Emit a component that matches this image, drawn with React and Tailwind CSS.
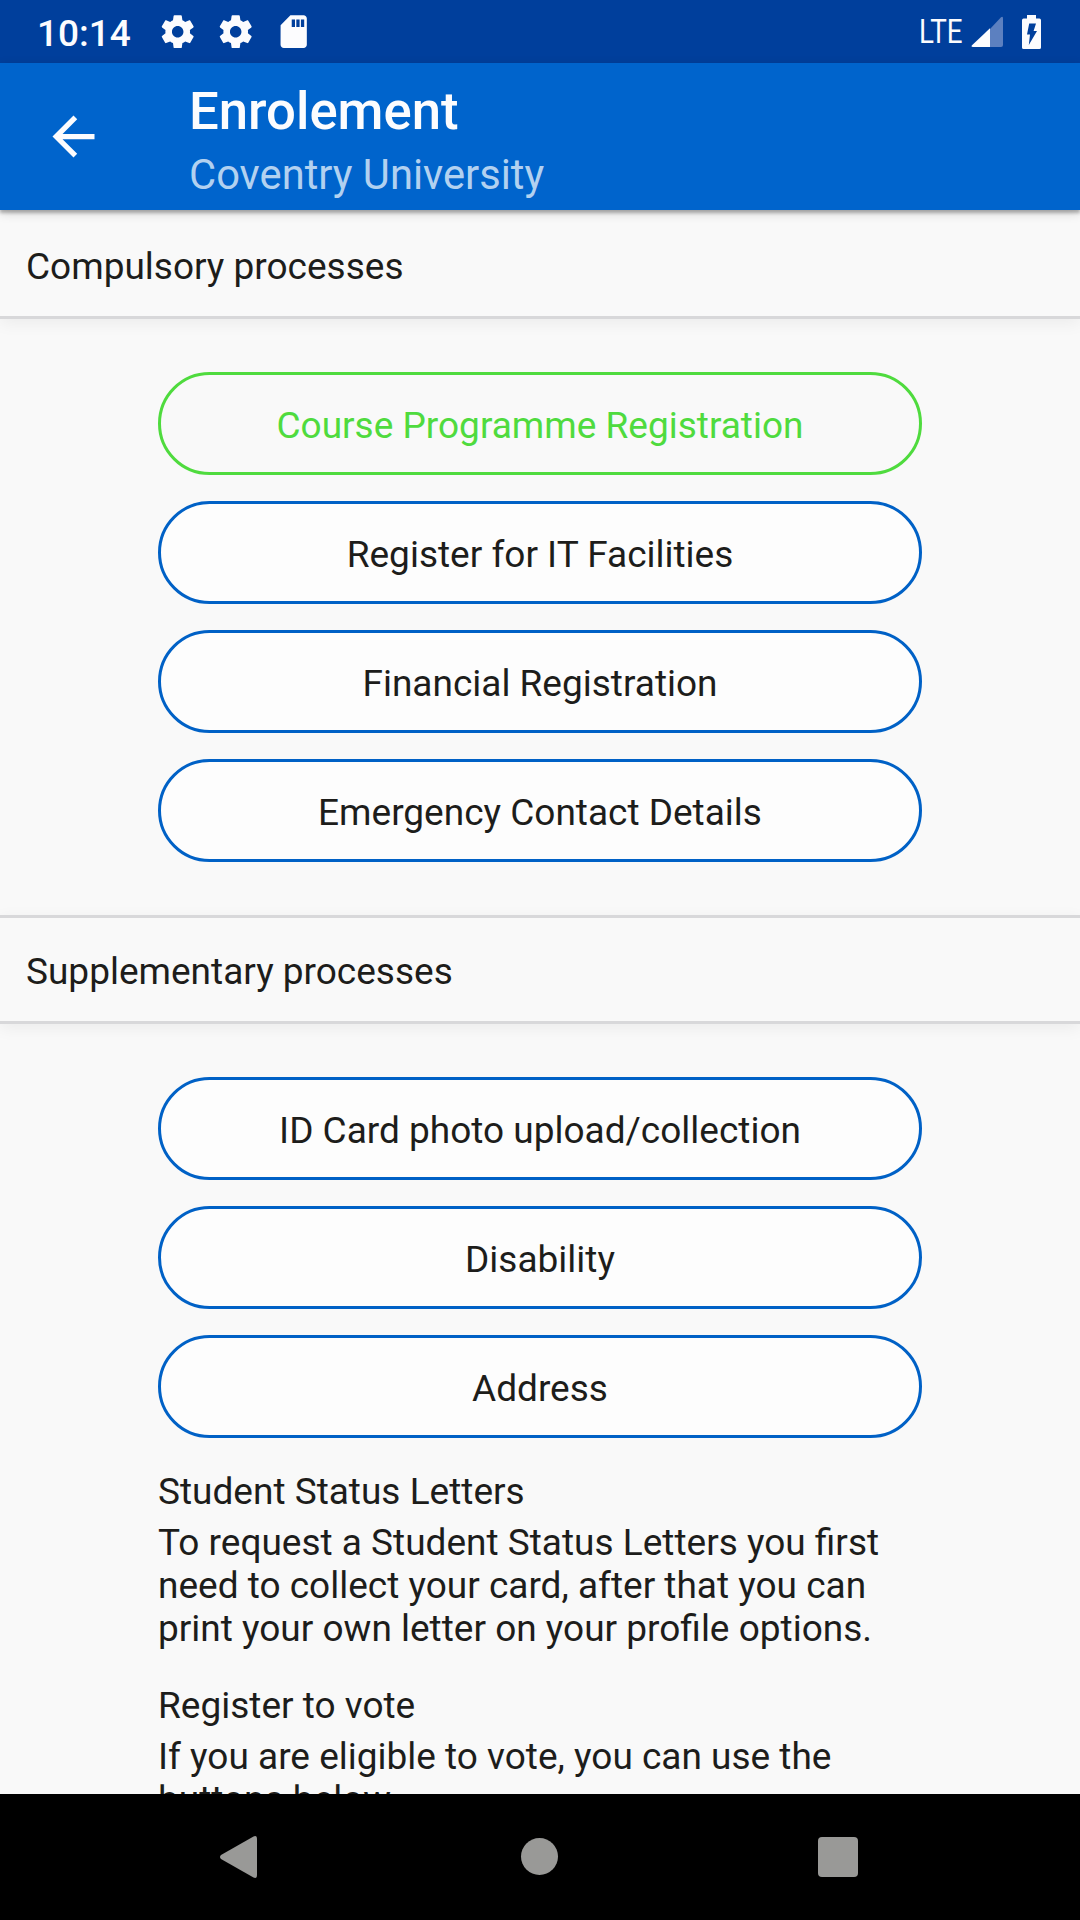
const compulsory = [
  { label: 'Course Programme Registration', done: true },
  { label: 'Register for IT Facilities' },
  { label: 'Financial Registration' },
  { label: 'Emergency Contact Details' },
];

const supplementary = [
  { label: 'ID Card photo upload/collection' },
  { label: 'Disability' },
  { label: 'Address' },
];

function GearIcon() {
  return (
    <svg viewBox="0 0 24 24" className="size-[39.4px] fill-[#fcfcfe]">
      <path d="M19.43 12.98c.04-.32.07-.64.07-.98s-.03-.66-.07-.98l2.11-1.65c.19-.15.24-.42.12-.64l-2-3.46c-.12-.22-.39-.3-.61-.22l-2.49 1c-.52-.4-1.08-.73-1.69-.98l-.38-2.65C14.46 2.18 14.25 2 14 2h-4c-.25 0-.46.18-.49.42l-.38 2.65c-.61.25-1.17.59-1.69.98l-2.49-1c-.23-.09-.49 0-.61.22l-2 3.46c-.13.22-.07.49.12.64l2.11 1.65c-.04.32-.07.65-.07.98s.03.66.07.98l-2.11 1.65c-.19.15-.24.42-.12.64l2 3.46c.12.22.39.3.61.22l2.49-1c.52.4 1.08.73 1.69.98l.38 2.65c.03.24.24.42.49.42h4c.25 0 .46-.18.49-.42l.38-2.65c.61-.25 1.17-.59 1.69-.98l2.49 1c.23.09.49 0 .61-.22l2-3.46c.12-.22.07-.49-.12-.64l-2.11-1.65zM12 15.5c-1.93 0-3.5-1.57-3.5-3.5s1.57-3.5 3.5-3.5 3.5 1.57 3.5 3.5-1.57 3.5-3.5 3.5z" />
    </svg>
  );
}

function SdCardIcon() {
  return (
    <svg viewBox="0 0 24 24" className="size-[39.4px] fill-[#fcfcfe]">
      <path d="M18 2h-8L4.02 8 4 20c0 1.1.9 2 2 2h12c1.1 0 2-.9 2-2V4c0-1.1-.9-2-2-2zm-5.200 7.200h-2V4.500h2v4.700zm2.800 0h-2V4.500h2v4.700zm2.800 0h-2V4.500h2v4.700z" />
    </svg>
  );
}

function StatusBar() {
  return (
    <div className="flex h-[63px] shrink-0 items-center bg-[#003f9c] pl-[37px] pr-[39px] text-[#fcfcfe]">
      <span className="w-[121px] pt-[3px] text-[37px] leading-[43px] font-medium">10:14</span>
      <div className="flex gap-[18.6px]">
        <GearIcon />
        <GearIcon />
        <SdCardIcon />
      </div>
      <div className="ml-auto flex items-center">
        <span className="w-[52px] origin-left scale-x-[0.84] text-[33px] leading-[39px]">LTE</span>
        <svg viewBox="0 0 32 32" className="size-8">
          <path d="M19 13 30 1.200q2-1.400 2 1V29q0 2-2 2H19z" className="fill-[#5c80c0]" />
          <path d="M19 12.200V31H2q-2.400 0-1-1.800z" className="fill-[#fcfcfe]" />
        </svg>
        <svg viewBox="0 0 19 34" className="ml-[19px] h-[34px] w-[19px]">
          <path d="M5 0h9v3.600h3.400Q19 3.600 19 5.200v27.200q0 1.600-1.600 1.600H1.600Q0 34 0 32.400V5.200Q0 3.600 1.600 3.600H5z" className="fill-[#fcfcfe]" />
          <path d="M7.200 8.500h6.800l-2.400 7.500h3.400L6.800 30l1.200-10.500H5z" className="fill-[#003f9c]" />
        </svg>
      </div>
    </div>
  );
}

function Toolbar() {
  return (
    <header className="relative z-10 flex h-[147px] shrink-0 items-center bg-[#0064cc] pl-[42px] shadow-[0_3px_3px_rgba(0,0,0,0.25),0_3px_10px_rgba(0,0,0,0.16)]">
      <svg viewBox="0 0 24 24" className="size-[63px] fill-[#fcfcfe]">
        <path d="M20 11H7.830l5.590-5.590L12 4l-8 8 8 8 1.410-1.410L7.830 13H20v-2z" />
      </svg>
      <div className="ml-[84px] pt-[6px]">
        <h1 className="text-[52.7px] leading-[62px] font-medium text-[#fcfcfe]">Enrolement</h1>
        <p className="mt-[8px] text-[41.7px] leading-[50px] text-[#b2d1f0]">Coventry University</p>
      </div>
    </header>
  );
}

function SectionHeader({ children, className }) {
  return (
    <h2 className={`shrink-0 border-[#d8d8da] border-b-[3px] px-[26px] shadow-[0_4px_16px_rgba(0,0,0,0.06)] ${className}`}>
      {children}
    </h2>
  );
}

function ProcessList({ items }) {
  return (
    <div className="flex flex-col gap-[26px]">
      {items.map(({ label, done }) => (
        <button
          key={label}
          className={`h-[103px] w-full rounded-full border-[3px] pt-[4px] text-center leading-[43px] ${
            done ? 'border-[#4fdb3e] text-[#4fdb3e]' : 'border-[#0061c6] bg-[#fdfdfd]'
          }`}
        >
          {label}
        </button>
      ))}
    </div>
  );
}

function NavBar() {
  return (
    <nav className="z-10 flex h-[126px] shrink-0 items-center bg-black">
      <svg viewBox="0 0 37 42" className="ml-[220px] h-[42px] w-[37px] fill-[#999997]">
        <path d="M1 19 33.500.5Q37-1 37 3v36q0 4-3.500 2.500L1 23q-2-2 0-4z" />
      </svg>
      <span className="ml-[264px] -mt-px size-[37px] rounded-full bg-[#999997]" />
      <span className="ml-[260px] size-[40px] rounded-[4px] bg-[#999997]" />
    </nav>
  );
}

export default function App() {
  return (
    <div className="flex h-[1920px] w-[1080px] flex-col overflow-hidden bg-[#f9f9f9] font-[Roboto,sans-serif] text-[37px] leading-[43px] text-[#1d1d1b]">
      <StatusBar />
      <Toolbar />
      <main className="min-h-0 flex-1 overflow-hidden">
        <SectionHeader className="h-[109px] pt-[35px]">Compulsory processes</SectionHeader>
        <section className="px-[158px] pt-[53px] pb-[53px]">
          <ProcessList items={compulsory} />
        </section>
        <SectionHeader className="h-[109px] border-t-[3px] pt-[32px]">Supplementary processes</SectionHeader>
        <section className="px-[158px] pt-[53px]">
          <ProcessList items={supplementary} />
          <h3 className="mt-[32px]">Student Status Letters</h3>
          <p className="mt-[8px]">
            To request a Student Status Letters you first
            <br />
            need to collect your card, after that you can
            <br />
            print your own letter on your profile options.
          </p>
          <h3 className="mt-[34px]">Register to vote</h3>
          <p className="mt-[8px]">
            If you are eligible to vote, you can use the
            <br />
            buttons below.
          </p>
        </section>
      </main>
      <NavBar />
    </div>
  );
}
